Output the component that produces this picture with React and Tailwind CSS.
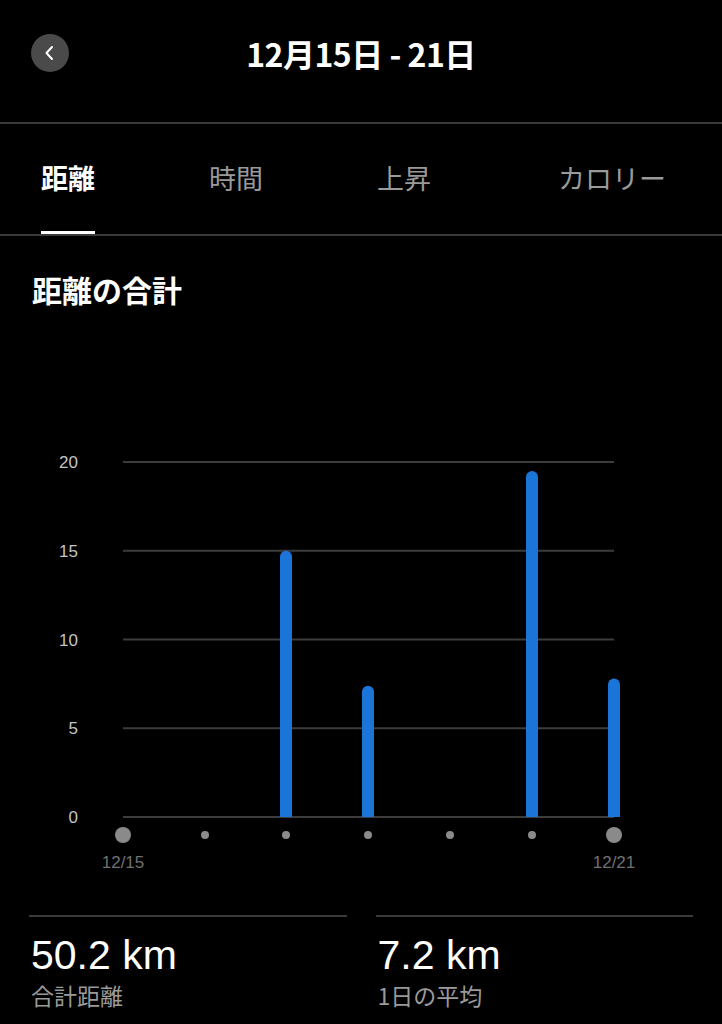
import React from 'react';

const FONT = { fontFamily: '"Noto Sans CJK JP", "Liberation Sans", sans-serif' };

const tabs = [
  { label: '距離', ml: 'ml-[41px]', active: true },
  { label: '時間', ml: 'ml-[114px]' },
  { label: '上昇', ml: 'ml-[114px]' },
  { label: 'カロリー', ml: 'ml-[127px]' },
];

const days = [
  { x: 123, v: 0, big: true, label: '12/15' },
  { x: 205, v: 0 },
  { x: 286, v: 15.0 },
  { x: 368, v: 7.4 },
  { x: 450, v: 0 },
  { x: 532, v: 19.5 },
  { x: 614, v: 7.8, big: true, label: '12/21' },
];

const BASE = 377;
const UNIT = 17.75;

const Chart = () => (
  <svg width="722" height="440" viewBox="0 0 722 440" className="block">
    {[20, 15, 10, 5, 0].map((v) => {
      const y = BASE - v * UNIT;
      return (
        <g key={v}>
          <line x1="123" x2="614" y1={y} y2={y} stroke="#3c3c3c" strokeWidth="2" />
          <text x="78" y={y + 6} textAnchor="end" fontSize="17" fill="#c4c4c4" fontFamily="Liberation Sans, sans-serif">
            {v}
          </text>
        </g>
      );
    })}
    {days.filter((d) => d.v > 0).map((d) => {
      const top = BASE - d.v * UNIT;
      return (
        <path
          key={d.x}
          d={`M${d.x - 6} ${BASE} L${d.x - 6} ${top + 6} A6 6 0 0 1 ${d.x + 6} ${top + 6} L${d.x + 6} ${BASE} Z`}
          fill="#1b74d8"
        />
      );
    })}
    {days.map((d) => (
      <circle key={d.x} cx={d.x} cy="395" r={d.big ? 8 : 4} fill="#8a8a8a" />
    ))}
    {days.filter((d) => d.label).map((d) => (
      <text key={d.x} x={d.x} y="428" textAnchor="middle" fontSize="17" fill="#707070" fontFamily="Liberation Sans, sans-serif">
        {d.label}
      </text>
    ))}
  </svg>
);

const Stat = ({ value, label }) => (
  <div className="flex-1">
    <div className="h-[2px] bg-[#3a3a3a]" />
    <div className="mt-[14px] pl-[2px] text-[41px] leading-[48px] text-white" style={{ fontFamily: '"Liberation Sans", sans-serif' }}>
      {value}
    </div>
    <div className="mt-[1px] pl-[2px] text-[23px] leading-[30px] text-[#9a9a9a]">{label}</div>
  </div>
);

export default function App() {
  return (
    <div className="w-[722px] h-[1024px] bg-black overflow-hidden" style={FONT}>
      {/* header */}
      <div className="h-[122px]">
        <div className="pt-[34px] grid grid-cols-[1fr_auto_1fr] items-center">
          <div className="pl-[31px]">
            <div className="w-[38px] h-[38px] rounded-full bg-[#4a4a4a] flex items-center justify-center">
              <svg width="14" height="16" viewBox="0 0 14 16">
                <path d="M9 2 L3.5 8 L9 14" fill="none" stroke="#fff" strokeWidth="2" strokeLinecap="round" strokeLinejoin="round" />
              </svg>
            </div>
          </div>
          <div className="text-[32px] leading-[38px] font-bold text-white tracking-[-0.5px]">12月15日 - 21日</div>
          <div />
        </div>
      </div>
      <div className="h-[2px] bg-[#3a3a3a]" />

      {/* tabs */}
      <div className="h-[110px] flex items-end">
        {tabs.map((t) => (
          <div key={t.label} className={`${t.ml} flex flex-col`}>
            <div className={`text-[27px] leading-[38px] ${t.active ? 'text-white font-bold' : 'text-[#9a9a9a]'}`}>{t.label}</div>
            <div className={`mt-[34px] h-[3px] ${t.active ? 'bg-white' : 'bg-transparent'}`} />
          </div>
        ))}
      </div>
      <div className="h-[2px] bg-[#3a3a3a]" />

      {/* title */}
      <div className="pl-[32px] pt-[34px] h-[204px]">
        <div className="text-[30px] leading-[38px] font-bold text-white">距離の合計</div>
      </div>

      <Chart />

      {/* stats */}
      <div className="mt-[35px] px-[29px] flex gap-[29px]">
        <Stat value="50.2 km" label="合計距離" />
        <Stat value="7.2 km" label="1日の平均" />
      </div>
    </div>
  );
}
